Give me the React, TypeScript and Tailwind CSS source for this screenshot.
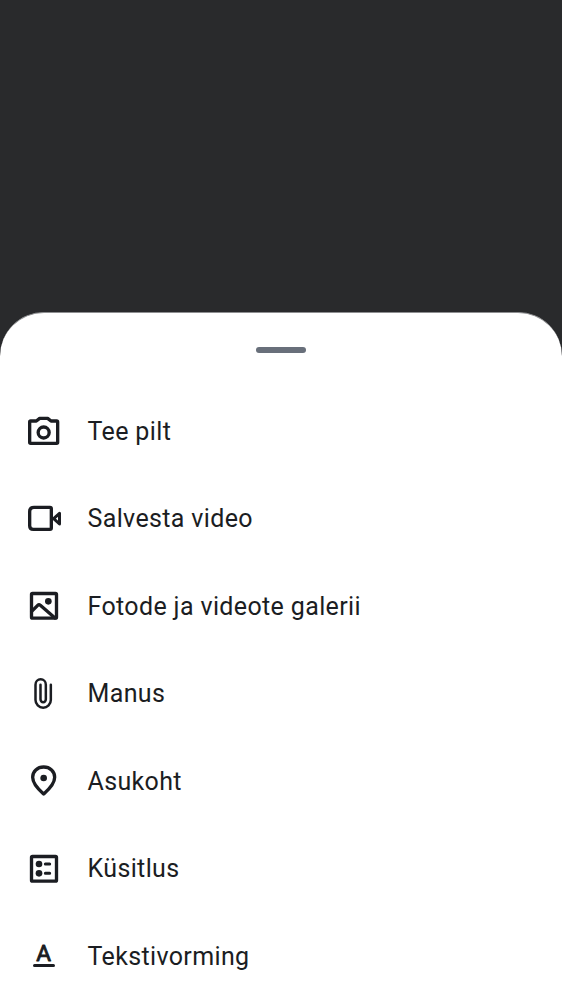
import type { ReactNode } from "react";

const items: { label: string; icon: ReactNode }[] = [
  {
    label: "Tee pilt",
    icon: (
      <g transform="translate(0 3)">
        <path d="M50 57H67L77 49H101L111 57H128Q131 57 131 60V121Q131 124 128 124H50Q47 124 47 121V60Q47 57 50 57Z" />
        <circle cx="89" cy="91.5" r="16.5" />
      </g>
    ),
  },
  {
    label: "Salvesta video",
    icon: (
      <>
        <path d="M60 55H108Q112 55 112 59V117Q112 121 108 121H58Q47 121 47 110V68Q47 55 60 55Z" />
        <path d="M119 89L136.500 73V105Z" strokeWidth="9" />
      </>
    ),
  },
  {
    label: "Fotode ja videote galerii",
    icon: (
      <>
        <rect x="52.5" y="52.5" width="75" height="74" rx="3" />
        <path d="M53 106L71 88Q75 84 79 88L123 126" />
        <circle cx="103" cy="76" r="10" fill="currentColor" stroke="none" />
      </>
    ),
  },
  {
    label: "Manus",
    icon: (
      <path
        d="M110.500 62V108A23 23 0 0 1 64.500 108V62A15.500 16 0 0 1 95.500 62V106A8 9 0 0 1 79.500 106V62"
        strokeWidth="7.5"
      />
    ),
  },
  {
    label: "Asukoht",
    icon: (
      <>
        <path d="M89 129C82 123 56 101 56 79C56 61 70 48 89 48C108 48 122 61 122 79C122 101 96 123 89 129Z" />
        <circle cx="89" cy="81" r="10" fill="currentColor" stroke="none" />
      </>
    ),
  },
  {
    label: "Küsitlus",
    icon: (
      <>
        <rect x="52.5" y="52.5" width="75" height="74" rx="3" />
        <circle cx="75" cy="75" r="10" fill="currentColor" stroke="none" />
        <circle cx="75" cy="103" r="10" fill="currentColor" stroke="none" />
        <path d="M94 75H107M94 103H107" strokeWidth="9" />
      </>
    ),
  },
  {
    label: "Tekstivorming",
    icon: (
      <>
        <text
          x="89"
          y="103.5"
          textAnchor="middle"
          fill="currentColor"
          strokeWidth="2.5"
          className="font-['Roboto',sans-serif] text-[68px] font-normal"
        >
          A
        </text>
        <path d="M61.500 118.500H118.500" strokeWidth="9" />
      </>
    ),
  },
];

export default function App() {
  return (
    <div className="flex h-[1000px] w-full flex-col overflow-hidden bg-[#292a2c] pt-[312px] font-['Roboto',sans-serif] text-[#1b1d22]">
      <section className="flex min-h-0 flex-1 flex-col overflow-hidden rounded-t-[44px] border-t border-[#8e8f91] bg-white">
        <div className="mt-[34px] h-1.5 w-[50px] shrink-0 self-center rounded-full bg-[#686f7a]" />
        <ul className="mt-[34.65px]">
          {items.map(({ label, icon }) => (
            <li key={label} className="flex h-[87.5px] items-center pl-3.5">
              <svg
                viewBox="0 0 180 180"
                className="size-[60px] shrink-0"
                fill="none"
                stroke="currentColor"
                strokeWidth="10"
                strokeLinecap="round"
                strokeLinejoin="round"
                aria-hidden="true"
              >
                {icon}
              </svg>
              <span className="ml-[13.5px] text-[25px] leading-[37.5px] tracking-[0.36px]">{label}</span>
            </li>
          ))}
        </ul>
      </section>
    </div>
  );
}
